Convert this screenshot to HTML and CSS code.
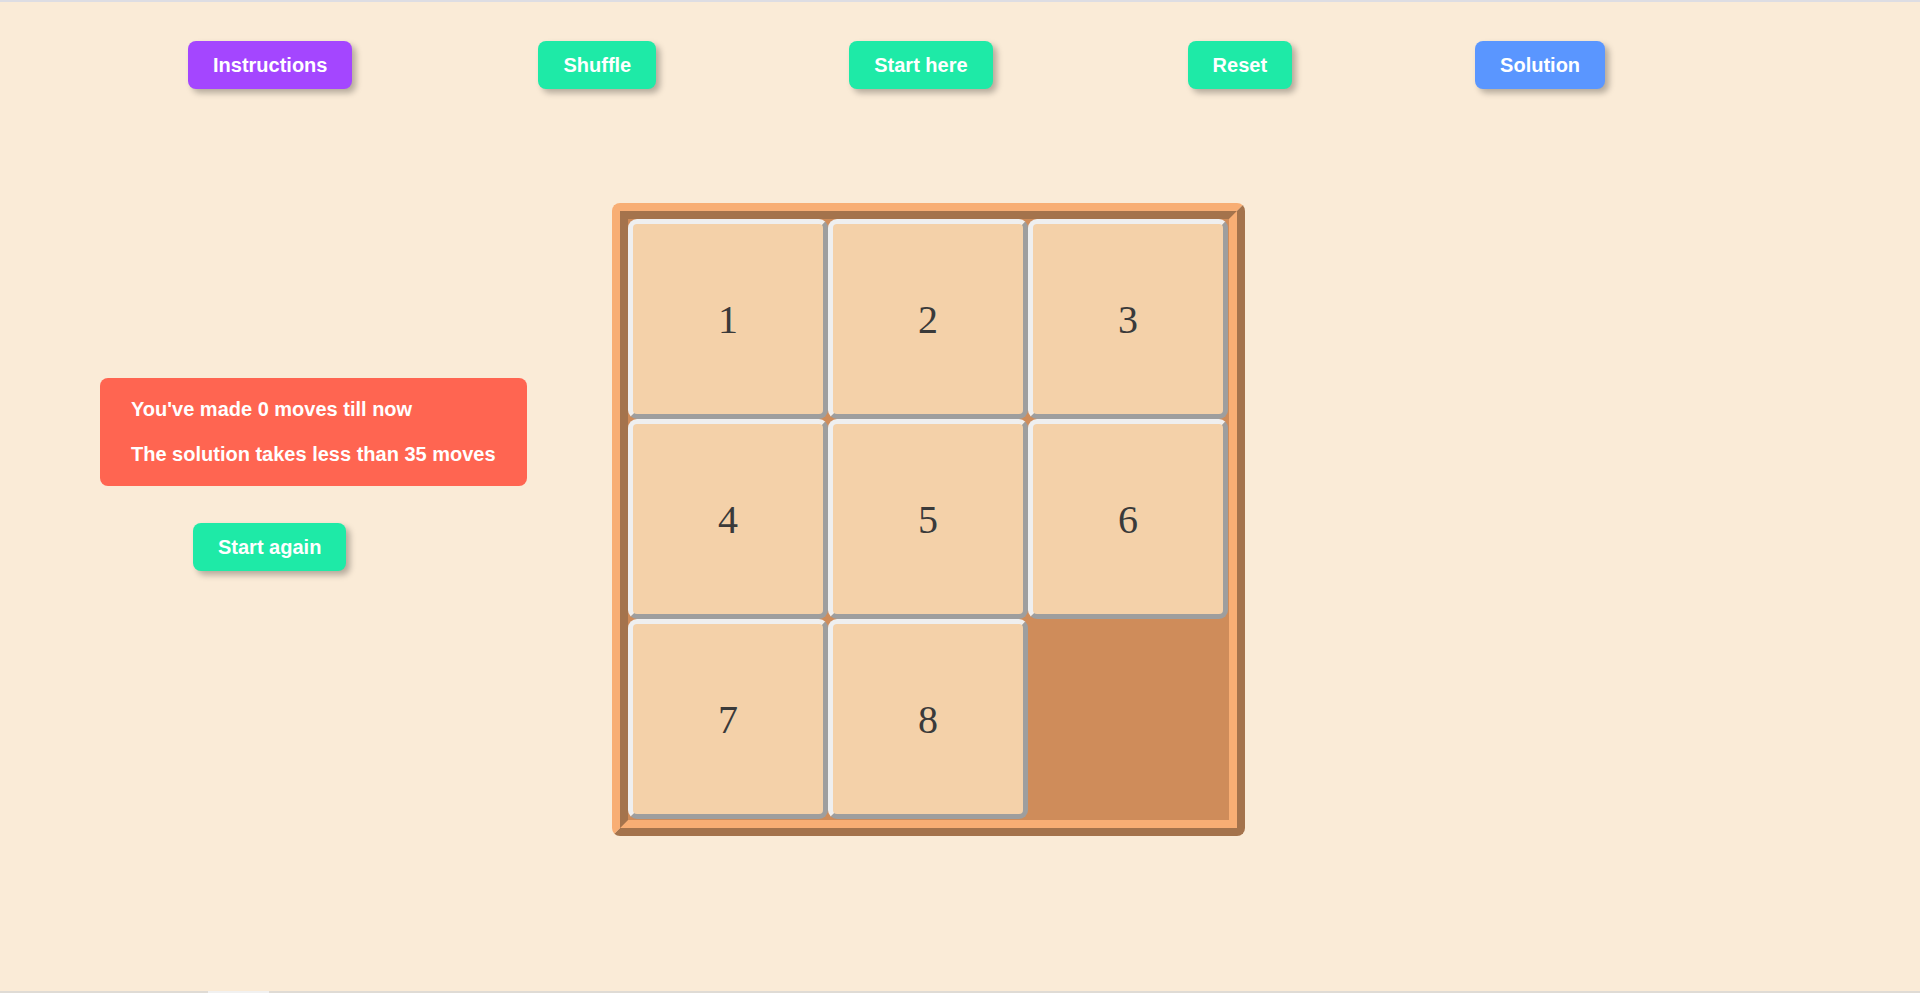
FILE: index.html
```html
<!DOCTYPE html>
<html lang="en">
<head>
<meta charset="utf-8">
<title>8 Puzzle</title>
<link rel="stylesheet" href="styles.css">
</head>
<body>
<div class="page">
  <nav class="toolbar">
    <button class="btn btn-purple">Instructions</button>
    <button class="btn btn-green">Shuffle</button>
    <button class="btn btn-green">Start here</button>
    <button class="btn btn-green">Reset</button>
    <button class="btn btn-blue">Solution</button>
  </nav>
  <main class="game">
    <section class="side">
      <div class="status">
        <p class="status-line">You've made 0 moves till now</p>
        <p class="status-line">The solution takes less than 35 moves</p>
      </div>
      <button class="btn btn-green again">Start again</button>
    </section>
    <div class="board">
      <div class="tile">1</div>
      <div class="tile">2</div>
      <div class="tile">3</div>
      <div class="tile">4</div>
      <div class="tile">5</div>
      <div class="tile">6</div>
      <div class="tile">7</div>
      <div class="tile">8</div>
      <div class="empty"></div>
    </div>
  </main>
  <div class="footer-line"><span class="footer-thumb"></span></div>
</div>
</body>
</html>
```
FILE: styles.css
```css
html, body {
  margin: 0;
  padding: 0;
}
body {
  background: #faebd7;
  font-family: "Liberation Sans", Arial, sans-serif;
}
.page {
  height: 100vh;
  box-sizing: border-box;
  border-top: 2px solid #dddde3;
  display: flex;
  flex-direction: column;
}
.toolbar {
  display: flex;
  align-items: flex-start;
  padding-top: 39px;
}
.btn {
  height: 48px;
  padding: 0 25px;
  border: none;
  border-radius: 8px;
  color: #ffffff;
  font-family: "Liberation Sans", Arial, sans-serif;
  font-weight: 700;
  font-size: 20px;
  line-height: 48px;
  box-shadow: 4px 4px 6px rgba(0, 0, 0, 0.28);
  cursor: pointer;
}
.btn-purple { background: #a446ff; }
.btn-green { background: #1eeaa7; }
.btn-blue { background: #5a96ff; }

.toolbar .btn:nth-child(1) { margin-left: 188px; }
.toolbar .btn:nth-child(2) { margin-left: 186px; }
.toolbar .btn:nth-child(3) { margin-left: 193px; }
.toolbar .btn:nth-child(4) { margin-left: 195px; }
.toolbar .btn:nth-child(5) { margin-left: 183px; }

.game {
  flex: 1;
  display: flex;
  align-items: flex-start;
  margin-top: 114px;
}
.side {
  width: 612px;
  box-sizing: border-box;
  padding-left: 100px;
  padding-top: 175px;
  display: flex;
  flex-direction: column;
  align-items: flex-start;
}
.status {
  background: #ff6551;
  border-radius: 8px;
  padding: 20px 31px;
  display: flex;
  flex-direction: column;
  gap: 22px;
}
.status-line {
  margin: 0;
  color: #ffffff;
  font-weight: 700;
  font-size: 20px;
  line-height: 23px;
  white-space: nowrap;
}
.again {
  margin-top: 37px;
  margin-left: 93px;
}
.board {
  width: 601px;
  height: 601px;
  border: 16px ridge #f8ae74;
  border-radius: 8px;
  background: #cf8c5a;
  display: grid;
  grid-template-columns: repeat(3, 200px);
  grid-template-rows: repeat(3, 200px);
}
.tile {
  box-sizing: border-box;
  border: 5px solid;
  border-color: #efefef #9e9e9e #9e9e9e #efefef;
  border-radius: 9px;
  background: #f4d1a9;
  display: flex;
  align-items: center;
  justify-content: center;
  font-family: "Liberation Serif", "Times New Roman", serif;
  font-size: 40px;
  color: #3a3a3a;
}
.footer-line {
  height: 2px;
  background: #dfdbd5;
  display: flex;
}
.footer-thumb {
  margin-left: 208px;
  width: 61px;
  background: #f1f1f1;
}
```
